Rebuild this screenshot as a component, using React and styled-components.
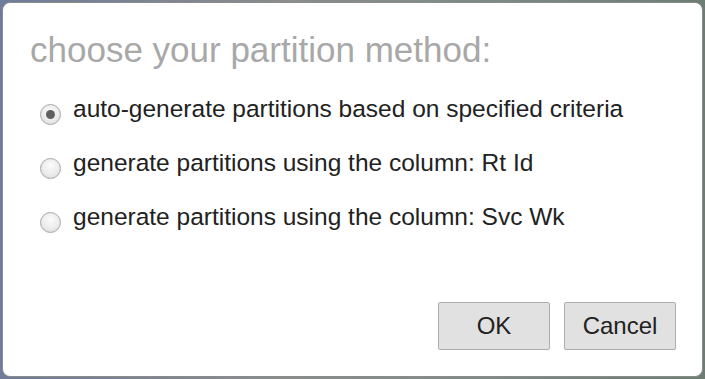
import React, { useState } from "react";
import styled, { createGlobalStyle } from "styled-components";

const GlobalStyle = createGlobalStyle`
  html, body {
    margin: 0;
    padding: 0;
    background: #7c8597;
    font-family: "Liberation Sans", Arial, sans-serif;
  }
`;

const Backdrop = styled.div`
  width: 705px;
  height: 379px;
  padding: 2px;
  box-sizing: border-box;
  background: linear-gradient(90deg, #6f7c9a 0%, #8a8d8c 40%, #7d8a86 70%, #6c7e74 100%);
`;

const Dialog = styled.div`
  width: 701px;
  height: 375px;
  box-sizing: border-box;
  display: flex;
  flex-direction: column;
  background: #fff;
  border: 1px solid #8b8b8b;
  border-radius: 8px;
  padding: 27px 26px 26px 27px;
`;

const Title = styled.h1`
  margin: 0;
  font-size: 35px;
  line-height: 40px;
  font-weight: normal;
  color: #a8a8a8;
`;

const Options = styled.div`
  display: flex;
  flex-direction: column;
  gap: 24px;
  margin-top: 24.5px;
`;

const Option = styled.label`
  display: flex;
  align-items: flex-start;
  cursor: default;
`;

const Radio = styled.span`
  flex: none;
  width: 21px;
  height: 21px;
  margin: 9px 12px 0 10px;
  box-sizing: border-box;
  border-radius: 50%;
  border: 1px solid #a9a9a9;
  background: radial-gradient(circle at 50% 35%, #fbfbfb 0%, #ececec 55%, #d8d8d8 100%);
  box-shadow: inset 0 0 1px rgba(0, 0, 0, 0.1);
  display: flex;
  align-items: center;
  justify-content: center;

  &::after {
    content: "";
    width: 9px;
    height: 9px;
    border-radius: 50%;
    background: ${(p) => (p.$checked ? "#5f5f5f" : "transparent")};
  }
`;

const OptionText = styled.span`
  font-size: 24.5px;
  line-height: 28px;
  color: #222;
`;

const Buttons = styled.div`
  margin-top: auto;
  display: flex;
  justify-content: flex-end;
  gap: 14px;
`;

const Button = styled.button`
  width: 112px;
  height: 48px;
  box-sizing: border-box;
  border: 1px solid #adadad;
  border-radius: 2px;
  background: #e1e1e1;
  color: #222;
  font-family: "Liberation Sans", Arial, sans-serif;
  font-size: 24px;
  padding: 0;
`;

const options = [
  "auto-generate partitions based on specified criteria",
  "generate partitions using the column: Rt Id",
  "generate partitions using the column: Svc Wk",
];

export default function App() {
  const [selected, setSelected] = useState(0);

  return (
    <>
      <GlobalStyle />
      <Backdrop>
        <Dialog>
          <Title>choose your partition method:</Title>
          <Options>
            {options.map((text, i) => (
              <Option key={i} onClick={() => setSelected(i)}>
                <Radio $checked={selected === i} />
                <OptionText>{text}</OptionText>
              </Option>
            ))}
          </Options>
          <Buttons>
            <Button>OK</Button>
            <Button>Cancel</Button>
          </Buttons>
        </Dialog>
      </Backdrop>
    </>
  );
}
